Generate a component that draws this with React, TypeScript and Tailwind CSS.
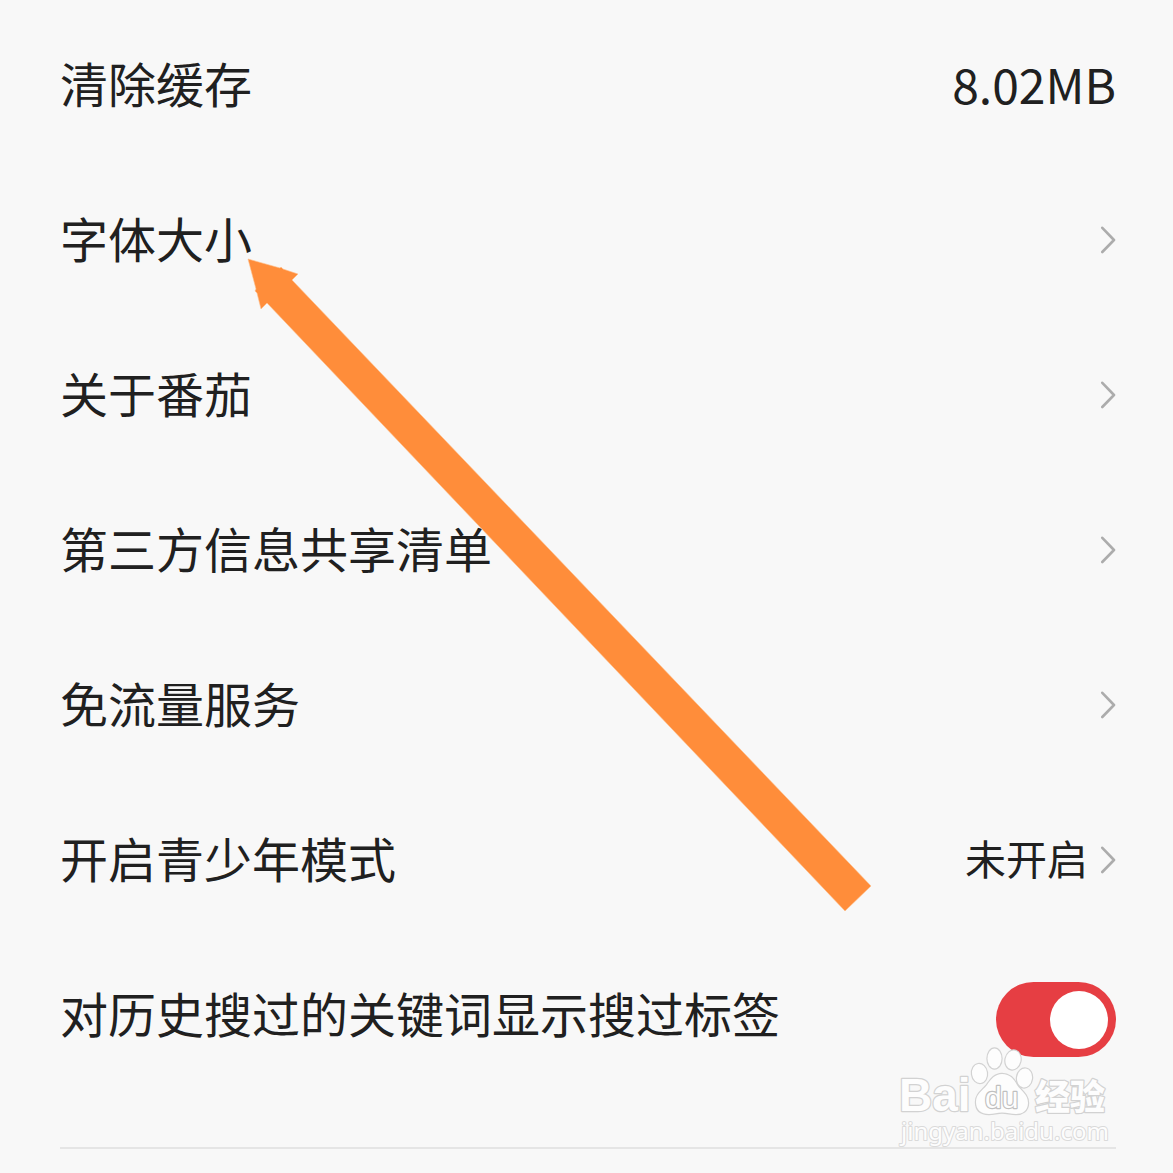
import { useState } from "react";

interface SettingItem {
  label: string;
  value?: string;
}

const links: SettingItem[] = [
  { label: "字体大小" },
  { label: "关于番茄" },
  { label: "第三方信息共享清单" },
  { label: "免流量服务" },
  { label: "开启青少年模式", value: "未开启" },
];

function Chevron() {
  return (
    <svg width="16" height="28" viewBox="0 0 16 28" fill="none" stroke="#acacac" strokeWidth="2.6" strokeLinecap="round" strokeLinejoin="round" aria-hidden="true">
      <path d="M2.3 1.8 14 14 2.3 26" />
    </svg>
  );
}

function Arrow() {
  return (
    <svg className="absolute top-0 left-0 pointer-events-none" width="880" height="920" viewBox="0 0 880 920" aria-hidden="true">
      <path d="M248 259 280 268 281 267 283 269 298 274 292 280 871 886 845 911 267 303 261 309 257 293 255 291 256 289Z" fill="#ff8d3a" stroke="#ffc08c" strokeWidth="0.6" />
    </svg>
  );
}

function Watermark() {
  return (
    <svg className="absolute right-[60px] bottom-6 pointer-events-none" width="220" height="106" viewBox="0 0 220 106" role="img" aria-label="Baidu 经验">
      <g fill="#fdfdfd" stroke="#d2d2d2" strokeWidth="2.4" strokeLinejoin="round" paintOrder="stroke" fontFamily="'Liberation Sans', 'Noto Sans CJK SC', sans-serif">
        <ellipse cx="86.5" cy="30.5" rx="7.5" ry="9.5" transform="rotate(-8 86.5 30.5)" />
        <ellipse cx="101.5" cy="15.5" rx="7" ry="10" />
        <ellipse cx="120" cy="17" rx="7.5" ry="9.5" transform="rotate(12 120 17)" />
        <ellipse cx="131.5" cy="35" rx="7.5" ry="9.5" transform="rotate(8 131.5 35)" />
        <path d="M109 31c8 0 12 5 15 11 4 6 11 9 11 18 0 8-6 11-12 11-5 0-9-1.500-14-1.500s-8 1.500-13 1.500c-8 0-13-4-13-12 0-8 6-11 11-17 4-6 8-11 15-11Z" />
        <text x="6" y="68" fontSize="46" fontWeight="700">Bai</text>
        <text x="92" y="65" fontSize="30" stroke="#c0c0c0">du</text>
        <text x="142" y="67" fontSize="35" fontWeight="900">经验</text>
        <text x="8" y="97" fontSize="24" strokeWidth="2" stroke="#dadada" fontFamily="'Noto Sans', sans-serif">jingyan.baidu.com</text>
      </g>
    </svg>
  );
}

export default function App() {
  const [showTag, setShowTag] = useState(true);

  return (
    <main className="relative min-h-screen overflow-hidden bg-[#f8f8f8] pt-[7px] pr-[57px] pl-[60px] font-['Noto_Sans_CJK_SC',sans-serif] text-5xl text-[#202020]">
      <button className="flex h-[155px] w-full items-center justify-between text-left">
        <span className="pb-1.5">清除缓存</span>
        <span className="pb-1">8.02MB</span>
      </button>

      {links.map(item => (
        <button key={item.label} className="flex h-[155px] w-full items-center justify-between text-left">
          <span className="pb-1.5">{item.label}</span>
          <span className="flex items-center gap-3">
            {item.value && <span className="pb-1 text-[41px]">{item.value}</span>}
            <Chevron />
          </span>
        </button>
      ))}

      <div className="flex h-[155px] items-center justify-between">
        <label htmlFor="search-tag" className="pb-1.5">对历史搜过的关键词显示搜过标签</label>
        <input
          id="search-tag"
          type="checkbox"
          role="switch"
          checked={showTag}
          onChange={e => setShowTag(e.target.checked)}
          className="mt-2.5 flex h-[75px] w-[120px] appearance-none items-center rounded-full bg-[#d0d0d0] px-2 before:size-[58px] before:rounded-full before:bg-white checked:justify-end checked:bg-[#e63e43]"
        />
      </div>

      <hr className="mt-[55px] border-t-2 border-[#e5e5e5]" />

      <Arrow />
      <Watermark />
    </main>
  );
}
